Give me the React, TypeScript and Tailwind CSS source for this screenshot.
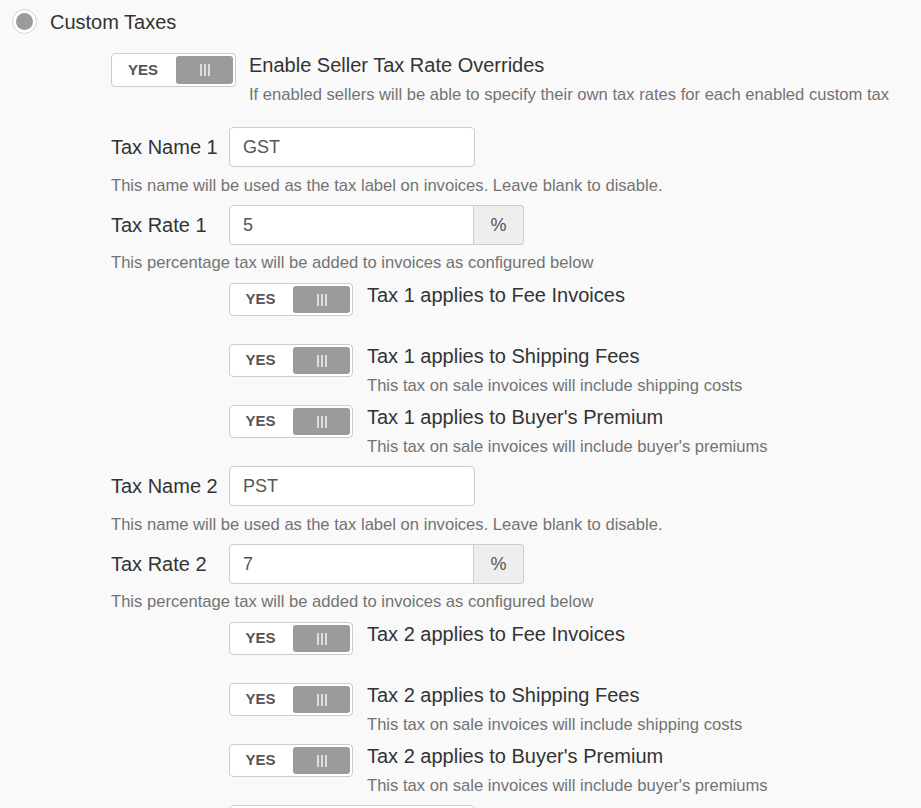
import React from 'react'

function Switch({ big }: { big?: boolean }) {
  return (
    <div
      className={`flex shrink-0 rounded-[4px] border border-[#cccccc] bg-white p-[2px] ${
        big ? 'h-[34px] w-[125px]' : 'h-[33px] w-[124px]'
      }`}
    >
      <span className="flex flex-1 items-center justify-center pr-[4px] text-[15px] font-bold text-[#555555]">
        YES
      </span>
      <span className="flex w-[57px] items-center justify-center gap-[2px] rounded-[3px] bg-[#9b9b9b]">
        <span className="h-[12px] w-[2px] bg-[#dedede]" />
        <span className="h-[12px] w-[2px] bg-[#dedede]" />
        <span className="h-[12px] w-[2px] bg-[#dedede]" />
      </span>
    </div>
  )
}

function ToggleRow({ label, help }: { label: string; help?: string }) {
  return (
    <div className="flex h-[61px] gap-[14px] pl-[118px]">
      <Switch />
      <div>
        <div className="text-[20px] leading-6">{label}</div>
        {help && <div className="mt-2 text-[16.6px] leading-5 text-[#737373]">{help}</div>}
      </div>
    </div>
  )
}

function NameField({ label, value }: { label: string; value: string }) {
  return (
    <div className="h-[78px]">
      <div className="flex">
        <label className="w-[118px] pt-[6px] text-[20px] leading-7">{label}</label>
        <div className="flex h-[40px] w-[246px] items-center rounded-[4px] border border-[#cccccc] bg-white px-[13px] text-[18px] text-[#555555]">
          {value}
        </div>
      </div>
      <div className="mt-[9px] text-[16.6px] leading-5 text-[#737373]">
        This name will be used as the tax label on invoices. Leave blank to disable.
      </div>
    </div>
  )
}

function RateField({ label, value }: { label: string; value: string }) {
  return (
    <div className="h-[78px]">
      <div className="flex">
        <label className="w-[118px] pt-[6px] text-[20px] leading-7">{label}</label>
        <div className="flex h-[40px]">
          <div className="flex w-[245px] items-center rounded-l-[4px] border border-[#cccccc] bg-white px-[13px] text-[18px] text-[#555555]">
            {value}
          </div>
          <div className="flex w-[50px] items-center justify-center rounded-r-[4px] border border-l-0 border-[#cccccc] bg-[#eeeeee] text-[18px] text-[#555555]">
            %
          </div>
        </div>
      </div>
      <div className="mt-2 text-[16.6px] leading-5 text-[#737373]">
        This percentage tax will be added to invoices as configured below
      </div>
    </div>
  )
}

function TaxBlock({ n, name, rate }: { n: number; name: string; rate: string }) {
  return (
    <>
      <NameField label={`Tax Name ${n}`} value={name} />
      <RateField label={`Tax Rate ${n}`} value={rate} />
      <ToggleRow label={`Tax ${n} applies to Fee Invoices`} />
      <ToggleRow
        label={`Tax ${n} applies to Shipping Fees`}
        help="This tax on sale invoices will include shipping costs"
      />
      <ToggleRow
        label={`Tax ${n} applies to Buyer's Premium`}
        help="This tax on sale invoices will include buyer's premiums"
      />
    </>
  )
}

export default function App() {
  return (
    <div className="h-[808px] overflow-hidden bg-[#f9f9f9] font-['Liberation_Sans',Arial,sans-serif] text-[#333333]">
      <div className="mt-[9px] flex h-[25px] items-center gap-[13px] pl-[12px]">
        <span className="flex h-[25px] w-[25px] items-center justify-center rounded-full border border-[#d4d4d4] bg-white">
          <span className="h-[17px] w-[17px] rounded-full bg-[#9b9b9b]" />
        </span>
        <span className="text-[20px] leading-6">Custom Taxes</span>
      </div>

      <div className="pl-[111px] pt-[19px]">
        <div className="mb-[22px] flex gap-[13px]">
          <Switch big />
          <div>
            <div className="text-[20px] leading-6">Enable Seller Tax Rate Overrides</div>
            <div className="mt-2 text-[16.6px] leading-5 text-[#737373]">
              If enabled sellers will be able to specify their own tax rates for each enabled custom tax
            </div>
          </div>
        </div>

        <TaxBlock n={1} name="GST" rate="5" />
        <TaxBlock n={2} name="PST" rate="7" />
        <div className="flex">
          <div className="w-[118px]" />
          <div className="h-[40px] w-[246px] rounded-[4px] border border-[#cccccc] bg-white" />
        </div>
      </div>
    </div>
  )
}
